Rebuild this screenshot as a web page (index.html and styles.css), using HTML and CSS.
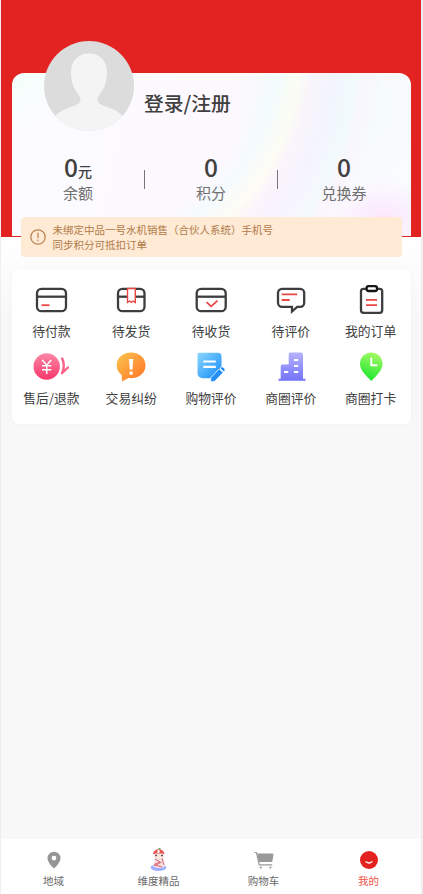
FILE: index.html
```html
<!DOCTYPE html>
<html lang="zh-CN">
<head>
<meta charset="utf-8">
<title>我的</title>
<link rel="stylesheet" href="styles.css">
</head>
<body>
<div class="app">
  <header class="hero">
    <section class="profile">
      <div class="user">
        <svg class="avatar" viewBox="0 0 90 90"><defs><clipPath id="round"><circle cx="45" cy="45" r="45"/></clipPath></defs><g clip-path="url(#round)"><path fill="#dcdcdc" d="M0 0h90v90H0z"/><path fill="#f4f4f4" d="M45 12.500C34 12.500 27 20 27 31c0 10 3 17 7 22 4 5 3 9-2 11-10 4-18 6-23 14v17h72V78c-5-8-13-10-23-14-5-2-6-6-2-11 4-5 7-12 7-22 0-11-7-18.500-18-18.500z"/></g></svg>
        <h1 class="login">登录/注册</h1>
      </div>
      <div class="stats">
        <div class="stat"><b>0<small>元</small></b><span>余额</span></div>
        <div class="stat"><b>0</b><span>积分</span></div>
        <div class="stat"><b>0</b><span>兑换券</span></div>
      </div>
    </section>
  </header>
  <main class="content">
    <div class="notice">
      <svg class="warn" viewBox="0 0 16 16" fill="none" stroke="#bd8350" stroke-width="1.300"><circle cx="8" cy="8" r="7.200"/><path d="M8 3.800v5.200M8 10.600v1.500"/></svg>
      <p>未绑定中品一号水机销售（合伙人系统）手机号<br>同步积分可抵扣订单</p>
    </div>
    <nav class="menu">
      <a class="item"><svg viewBox="0 0 36 32" fill="none" stroke="#3d3d40" stroke-width="2.300"><rect x="4" y="4.800" width="29" height="22.400" rx="4.500"/><path d="M4 12.700h29"/><path stroke="#e94743" stroke-width="1.800" d="M8.500 21.200h8"/></svg><span>待付款</span></a>
      <a class="item"><svg viewBox="0 0 36 32" fill="none" stroke="#3d3d40" stroke-width="2.300"><rect x="5" y="4.800" width="26.500" height="22.400" rx="4.500"/><path d="M5 12.700h26.500"/><path fill="#fff" stroke="#e94743" stroke-width="1.400" d="M14.500 4.500h7.800v14l-2.200-1.500-1.700 1.300-1.800-1.300-2.100 1.500z"/></svg><span>待发货</span></a>
      <a class="item"><svg viewBox="0 0 36 32" fill="none" stroke="#3d3d40" stroke-width="2.300"><rect x="3.700" y="4.800" width="29" height="22.400" rx="4.500"/><path d="M3.700 12.700h29"/><path stroke="#e94743" stroke-width="1.800" d="M13.500 18.200l4.700 4.200 6.300-5.700"/></svg><span>待收货</span></a>
      <a class="item"><svg viewBox="0 0 36 32" fill="none" stroke="#3d3d40" stroke-width="2.300"><path d="M9 4.800h18.200a4 4 0 0 1 4 4v10a4 4 0 0 1-4 4h-3L19 27.500v-4.700H9a4 4 0 0 1-4-4v-10a4 4 0 0 1 4-4z"/><path stroke="#e94743" stroke-width="1.800" d="M8.700 10.300h15.500M8.700 16h8"/></svg><span>待评价</span></a>
      <a class="item"><svg viewBox="0 0 36 32" fill="none" stroke="#3d3d40" stroke-width="2.300"><rect x="8" y="4.800" width="21.200" height="24" rx="2.500"/><rect x="13.600" y="2.200" width="10.400" height="4.800" rx="2" fill="#fff" stroke="#151515"/><path stroke="#e94743" stroke-width="1.800" d="M13 15.800h11M13 21.200h11"/></svg><span>我的订单</span></a>
      <a class="item"><svg viewBox="0 0 36 32"><defs><linearGradient id="pink" x2="0" y2="1"><stop stop-color="#fb86a5"/><stop offset="1" stop-color="#f7386b"/></linearGradient></defs><circle cx="13.700" cy="15.500" r="13.200" fill="url(#pink)"/><path fill="none" stroke="#fff" stroke-width="1.500" d="M9.200 9l4.500 5.200L18.200 9M13.700 14v9M9 14.800h9.400M9 18.700h9.400"/><path fill="none" stroke="#f9638b" stroke-width="2.400" stroke-linecap="round" stroke-linejoin="round" d="M29.200 7.500c2.300 5 2 10-.2 14.700l6-5.700"/></svg><span>售后/退款</span></a>
      <a class="item"><svg viewBox="0 0 34 32"><defs><linearGradient id="orange" x2="1" y2="1"><stop stop-color="#fbc650"/><stop offset="1" stop-color="#ff7022"/></linearGradient></defs><path fill="url(#orange)" d="M17 1.500C8.500 1.500 2.700 7 2.700 14.500c0 4.300 2 7.500 5 9.600L8 30.500l6.500-3.400c9.600 1 17-4.600 17-12.600C31.500 7 25.500 1.500 17 1.500z"/><path fill="#fff" d="M15 8h4.200L18.500 18.500h-2.800z"/><circle cx="17.100" cy="22.100" r="1.900" fill="#fff"/></svg><span>交易纠纷</span></a>
      <a class="item"><svg viewBox="0 0 34 32"><defs><linearGradient id="blue" x2="1" y2="1"><stop stop-color="#8dd5ff"/><stop offset="1" stop-color="#128cf8"/></linearGradient></defs><path fill="url(#blue)" d="M5 1.800h19a3.500 3.500 0 0 1 3.500 3.500V17L17 27.300H8.500a5 5 0 0 1-5-5v-19A1.500 1.500 0 0 1 5 1.800z"/><path stroke="#fff" stroke-width="2.200" d="M9.300 10.500h12.500M9.300 15.800h12.500"/><path fill="#218ff4" stroke="#fff" stroke-width=".8" d="M16.700 31v-4.200l8.500-8.900 4 3.700-8.500 8.700zM26 17.200l1.300-1.100c1.500-.9 4.600 1.900 3.500 3.500l-1 1.300z"/></svg><span>购物评价</span></a>
      <a class="item"><svg viewBox="0 0 34 32"><defs><linearGradient id="violet" x2="0" y2="1"><stop stop-color="#b6b2ff"/><stop offset="1" stop-color="#7373fb"/></linearGradient></defs><path fill="url(#violet)" d="M4.500 27.800h2.200V15.500a2 2 0 0 1 2-2h6v-10a2 2 0 0 1 2-2H27a2 2 0 0 1 2 2v24.300h2.500v2h-27z"/><path stroke="#fff" stroke-width="2" d="M20 9h4.200M20 15h4.200M20 21h4.200M10 21h4.200"/></svg><span>商圈评价</span></a>
      <a class="item"><svg viewBox="0 0 34 32"><defs><linearGradient id="lime" x1=".7" x2=".4" y2="1"><stop stop-color="#a8fa68"/><stop offset="1" stop-color="#18e62c"/></linearGradient></defs><path fill="url(#lime)" d="M17.300 1.500C10.800 1.500 6 6.500 6 12.700 6 19 11.500 24 17.300 30c5.800-6 11.300-11 11.300-17.300 0-6.200-4.800-11.200-11.300-11.200z"/><path fill="none" stroke="#fff" stroke-width="2" d="M17.300 6.800v7.400h6"/></svg><span>商圈打卡</span></a>
    </nav>
  </main>
  <footer class="tabs">
    <a class="tab"><svg viewBox="0 0 24 24"><path fill="#969696" fill-rule="evenodd" d="M12 3.700a6.500 6.500 0 0 0-6.500 6.500C5.500 15 12 20.400 12 20.400s6.500-5.400 6.500-10.200A6.500 6.500 0 0 0 12 3.700zm0 4a2.400 2.400 0 1 1 0 4.800 2.400 2.400 0 0 1 0-4.800z"/></svg><span>地域</span></a>
    <a class="tab"><svg viewBox="0 0 24 24"><ellipse cx="11.500" cy="19.500" rx="7.800" ry="3.400" fill="#9fafff"/><path fill="#f3dde2" d="M8 10h8l2 8.500q-5.500 3-12 0z"/><path fill="none" stroke="#d86974" stroke-width="1" d="M8 11l5 3-6 2.500 8 2.500M15 10l2 7M7.500 18l7-4"/><path fill="#ffe6dc" d="M7.500 5h9v4.500q-4.500 3.500-9 0z"/><path fill="#e55555" d="M6 6.500C6.500-.5 17-.5 17.500 6.500l-2-1h-7z"/><path fill="#fff" d="M10.500 2h2v3h-2z"/><path stroke="#635057" stroke-width="1.400" d="M8 7.500h2M14 7.500h2"/><path fill="#51af70" d="M11.500 0h2v1.200h-2z"/></svg><span>维度精品</span></a>
    <a class="tab"><svg viewBox="0 0 24 24"><path fill="#999" d="M5.200 5.500h15.300q1 0 .9 1.200l-.9 6.100q-.2 1.200-1.500 1.200H6.700z"/><path fill="none" stroke="#999" stroke-width="1.200" d="M2.500 4.500h2L7.200 16.800h13"/><circle cx="8.800" cy="19.500" r="1.100" fill="#999"/><circle cx="18.400" cy="19.500" r="1.100" fill="#999"/></svg><span>购物车</span></a>
    <a class="tab active"><svg viewBox="0 0 24 24"><circle cx="12" cy="12" r="9" fill="#e3211f"/><path fill="none" stroke="#fff" stroke-width="1.300" stroke-linecap="round" d="M9 13.800q3 2.400 6 0"/></svg><span>我的</span></a>
  </footer>
</div>
</body>
</html>
```
FILE: styles.css
```css
* {
  box-sizing: border-box;
}

body {
  margin: 0;
  background: #efefef;
  font-family: "Noto Sans CJK SC", sans-serif;
  color: #404040;
}

.app {
  display: flex;
  flex-direction: column;
  width: 420px;
  height: 894px;
  margin-left: 1px;
  overflow: hidden;
  background: #f8f8f8;
}

.hero {
  flex: none;
  height: 237px;
  padding: 73px 10.500px 1px;
  background: #e32321;
}

.profile {
  height: 163px;
  border-radius: 12px 12px 0 0;
  background:
    radial-gradient(ellipse 55px 40px at 372px 146px, #fce6fd, #fce6fd00),
    radial-gradient(circle 300px at 60px -20px, #fff0 62%, #effcff90 68%, #feffeea0 75%, #fdeffb90 80%, #f2f0ff90 87%, #fff0 96%),
    radial-gradient(circle 330px at 40px -20px, #fff0 86%, #eefcfca0 91%, #fbf0fb80 95%, #fff0 100%),
    radial-gradient(circle 100px at 315px 30px, #f2fcfb, #f2fcfb00),
    radial-gradient(circle 60px at 0 0, #f4fffb, #f4fffb00),
    linear-gradient(100deg, #fbfcff, #fdf9fe 45%, #fbf9ff 75%, #f9fcff);
}

.user {
  display: flex;
  align-items: flex-start;
  height: 77px;
  padding-left: 32.500px;
}

.avatar {
  flex: none;
  width: 90px;
  height: 90px;
  margin-top: -32.500px;
}

.login {
  margin: 15px 0 0 10px;
  font-size: 19.800px;
  font-weight: 500;
  line-height: 29px;
}

.stats {
  display: grid;
  grid-template-columns: repeat(3, 1fr);
}

.stat {
  display: flex;
  flex-direction: column;
  align-items: center;
  background: linear-gradient(#777, #777) right 0 top 20px / 1px 19px no-repeat;
}

.stat:last-child {
  background: none;
}

.stat b {
  height: 32px;
  font-size: 24.500px;
  font-weight: 500;
  line-height: 33px;
}

.stat small {
  font-size: 14px;
}

.stat span {
  color: #707070;
  font-size: 15px;
  line-height: 22px;
}

.content {
  flex: 1;
  padding: 0 10.500px;
  background: linear-gradient(#fff, #f8f8f8 80px);
}

.notice {
  position: relative;
  display: flex;
  align-items: center;
  height: 40px;
  margin: -20px 9px 12px 9.500px;
  padding-left: 9px;
  border-radius: 4px;
  background: #feead5;
}

.warn {
  width: 16px;
  height: 16px;
}

.notice p {
  margin: 0 0 0 6.500px;
  color: #b17b49;
  font-size: 10.500px;
  line-height: 15px;
}

.menu {
  display: grid;
  grid-template-columns: repeat(5, 1fr);
  grid-auto-rows: 67px;
  height: 155px;
  padding-top: 15px;
  border-radius: 7px;
  background: #fff;
  box-shadow: 0 0 6px #00000008;
}

.item {
  display: flex;
  flex-direction: column;
  align-items: center;
  font-size: 12.800px;
  line-height: 20px;
}

.item svg {
  width: 36px;
  height: 32px;
  margin-bottom: 5px;
}

.tabs {
  display: grid;
  grid-template-columns: repeat(4, 1fr);
  flex: none;
  height: 55px;
  padding-top: 9px;
  background: #fff;
}

.tab {
  display: flex;
  flex-direction: column;
  align-items: center;
  color: #6b6b6b;
  font-size: 10.500px;
  line-height: 17px;
}

.tab svg {
  width: 24px;
  height: 24px;
}

.tab.active {
  color: #f55143;
}
```
